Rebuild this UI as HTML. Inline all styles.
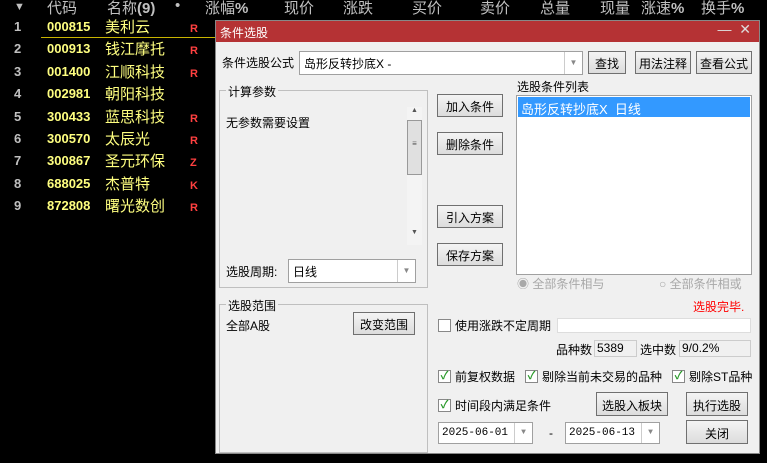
<!DOCTYPE html>
<html><head><meta charset="utf-8"><style>
*{margin:0;padding:0;box-sizing:border-box}
body{width:767px;height:463px;background:#000;position:relative;overflow:hidden;font-family:"Liberation Sans","Noto Sans CJK SC",sans-serif;font-size:12px}
.a{position:absolute;white-space:nowrap}
.h{color:#c0c0c0;font-size:15px;top:-3px}
.n{color:#c0c0c0;font-size:13px;font-weight:bold;left:14px}
.c{color:#ffff80;font-size:13px;font-weight:bold;left:47px}
.m{color:#ffff80;font-size:15px;left:105px}
.f{color:#ff4040;font-size:11px;font-weight:bold;left:190px}
.dlg{position:absolute;left:215px;top:20px;width:545px;height:434px;background:#f0f0f0;border:1px solid #888}
.t{position:absolute;left:0;top:0;width:100%;height:21px;background:#b53234;color:#fff;font-size:12px;padding:3px 0 0 4px}
.btn{position:absolute;border:1px solid #707070;background:linear-gradient(#f4f4f4,#dcdcdc);font-size:12px;text-align:center;color:#000}
.box{position:absolute;border:1px solid #a0a0a0;background:#fff}
.grp{position:absolute;border:1px solid #bfbfbf}
.gl{position:absolute;top:-8px;left:6px;background:#f0f0f0;padding:0 2px;font-size:12px}
.cb{position:absolute;width:13px;height:13px;border:1px solid #888;background:#fff;color:#2a9a2a;font-size:11px;line-height:11px;text-align:center;font-weight:bold}
.dd{position:absolute;right:0;top:0;bottom:0;width:18px;border-left:1px solid #ccc;color:#888;font-size:8px;text-align:center}
</style></head><body>
<div class="a h" style="left:14px;font-size:11px;top:1px">▼</div>
<div class="a h" style="left:47px">代码</div>
<div class="a h" style="left:107px">名称<b>(9)</b></div>
<div class="a h" style="left:175px">•</div>
<div class="a h" style="left:205px">涨幅<b>%</b></div>
<div class="a h" style="left:284px">现价</div>
<div class="a h" style="left:343px">涨跌</div>
<div class="a h" style="left:412px">买价</div>
<div class="a h" style="left:480px">卖价</div>
<div class="a h" style="left:540px">总量</div>
<div class="a h" style="left:600px">现量</div>
<div class="a h" style="left:641px">涨速<b>%</b></div>
<div class="a h" style="left:701px">换手<b>%</b></div>
<div class="a" style="left:41px;top:37px;width:180px;height:1px;background:#c8b400"></div>
<div class="a n" style="top:19px">1</div><div class="a c" style="top:19px">000815</div><div class="a m" style="top:16px">美利云</div><div class="a f" style="top:23px">R</div>
<div class="a n" style="top:41px">2</div><div class="a c" style="top:41px">000913</div><div class="a m" style="top:38px">钱江摩托</div><div class="a f" style="top:45px">R</div>
<div class="a n" style="top:64px">3</div><div class="a c" style="top:64px">001400</div><div class="a m" style="top:61px">江顺科技</div><div class="a f" style="top:68px">R</div>
<div class="a n" style="top:86px">4</div><div class="a c" style="top:86px">002981</div><div class="a m" style="top:83px">朝阳科技</div>
<div class="a n" style="top:109px">5</div><div class="a c" style="top:109px">300433</div><div class="a m" style="top:106px">蓝思科技</div><div class="a f" style="top:113px">R</div>
<div class="a n" style="top:131px">6</div><div class="a c" style="top:131px">300570</div><div class="a m" style="top:128px">太辰光</div><div class="a f" style="top:135px">R</div>
<div class="a n" style="top:153px">7</div><div class="a c" style="top:153px">300867</div><div class="a m" style="top:150px">圣元环保</div><div class="a f" style="top:157px">Z</div>
<div class="a n" style="top:176px">8</div><div class="a c" style="top:176px">688025</div><div class="a m" style="top:173px">杰普特</div><div class="a f" style="top:180px">K</div>
<div class="a n" style="top:198px">9</div><div class="a c" style="top:198px">872808</div><div class="a m" style="top:195px">曙光数创</div><div class="a f" style="top:202px">R</div>

<div class="dlg">
<div class="t">条件选股<span style="position:absolute;right:8px;top:0px;font-size:14px;color:#ddd">—&nbsp;&nbsp;✕</span></div>
<div class="a" style="left:6px;top:33px">条件选股公式</div>
<div class="box" style="left:83px;top:30px;width:284px;height:24px;padding:3px 4px">岛形反转抄底X -<div class="dd" style="padding-top:6px">▼</div></div>
<div class="btn" style="left:372px;top:30px;width:38px;height:23px;padding-top:3px">查找</div>
<div class="btn" style="left:419px;top:30px;width:56px;height:23px;padding-top:3px">用法注释</div>
<div class="btn" style="left:480px;top:30px;width:56px;height:23px;padding-top:3px">查看公式</div>
<div class="grp" style="left:3px;top:69px;width:209px;height:198px"><div class="gl">计算参数</div>
<div class="a" style="left:6px;top:23px">无参数需要设置</div>
<div class="a" style="left:187px;top:16px;width:15px;height:138px;background:#f4f4f4;color:#555;font-size:7px;text-align:center">▲<div style="margin-top:6px;height:55px;border:1px solid #999;background:#e0e0e0;font-size:8px;padding-top:18px">≡</div><div style="margin-top:54px">▼</div></div>
<div class="a" style="left:6px;top:172px">选股周期:</div>
<div class="box" style="left:68px;top:168px;width:128px;height:24px;padding:3px 4px">日线<div class="dd" style="padding-top:6px">▼</div></div>
</div>
<div class="grp" style="left:3px;top:283px;width:209px;height:149px"><div class="gl">选股范围</div>
<div class="a" style="left:6px;top:12px">全部A股</div>
<div class="btn" style="left:133px;top:7px;width:62px;height:23px;padding-top:3px">改变范围</div></div>
<div class="btn" style="left:221px;top:73px;width:66px;height:23px;padding-top:3px">加入条件</div>
<div class="btn" style="left:221px;top:111px;width:66px;height:23px;padding-top:3px">删除条件</div>
<div class="btn" style="left:221px;top:184px;width:66px;height:23px;padding-top:3px">引入方案</div>
<div class="btn" style="left:221px;top:222px;width:66px;height:23px;padding-top:3px">保存方案</div>
<div class="a" style="left:301px;top:57px">选股条件列表</div>
<div class="box" style="left:300px;top:74px;width:236px;height:180px"><div style="background:#3399ff;color:#fff;margin:1px;height:20px;padding:2px 3px;font-size:13px">岛形反转抄底X&nbsp;&nbsp;日线</div></div>
<div class="a" style="left:301px;top:254px;color:#a8a8a8">◉ 全部条件相与</div>
<div class="a" style="left:443px;top:254px;color:#a8a8a8">○ 全部条件相或</div>
<div class="a" style="left:477px;top:277px;color:#f00">选股完毕.</div>
<div class="cb" style="left:222px;top:298px"></div><div class="a" style="left:239px;top:296px">使用涨跌不定周期</div>
<div class="box" style="left:341px;top:297px;width:194px;height:15px;border-color:#ddd"></div>
<div class="a" style="left:340px;top:320px">品种数</div><div class="a" style="left:378px;top:319px;width:43px;height:17px;border:1px solid #ccc;padding-left:2px">5389</div>
<div class="a" style="left:424px;top:320px">选中数</div><div class="a" style="left:463px;top:319px;width:72px;height:17px;border:1px solid #ccc;padding-left:2px">9/0.2%</div>
<div class="cb" style="left:222px;top:349px">✓</div><div class="a" style="left:239px;top:347px">前复权数据</div>
<div class="cb" style="left:309px;top:349px">✓</div><div class="a" style="left:326px;top:347px">剔除当前未交易的品种</div>
<div class="cb" style="left:456px;top:349px">✓</div><div class="a" style="left:473px;top:347px">剔除ST品种</div>
<div class="cb" style="left:222px;top:378px">✓</div><div class="a" style="left:239px;top:376px">时间段内满足条件</div>
<div class="btn" style="left:380px;top:371px;width:72px;height:24px;padding-top:4px">选股入板块</div>
<div class="btn" style="left:470px;top:371px;width:62px;height:24px;padding-top:4px">执行选股</div>
<div class="box" style="left:222px;top:401px;width:95px;height:22px;padding:4px 3px;font-family:'Liberation Mono',monospace;font-size:11px">2025-06-01<div class="dd" style="padding-top:5px">▼</div></div>
<div class="a" style="left:333px;top:405px">-</div>
<div class="box" style="left:349px;top:401px;width:95px;height:22px;padding:4px 3px;font-family:'Liberation Mono',monospace;font-size:11px">2025-06-13<div class="dd" style="padding-top:5px">▼</div></div>
<div class="btn" style="left:470px;top:399px;width:62px;height:24px;padding-top:4px">关闭</div>
</div>
</body></html>
